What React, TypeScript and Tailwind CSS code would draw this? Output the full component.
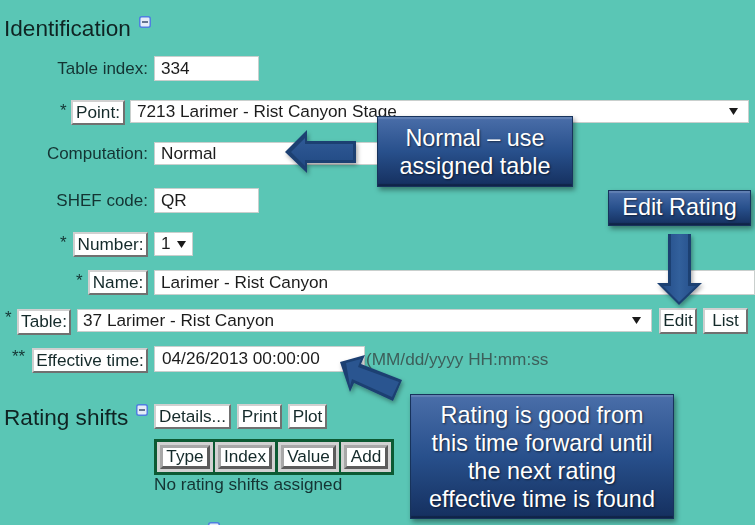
import React from "react";

const Btn = ({ children, className = "" }: { children: React.ReactNode; className?: string }) => (
  <span className={`flex items-center justify-center bg-white border-2 border-t-[#d0d0d0] border-l-[#d0d0d0] border-r-[#707070] border-b-[#707070] text-[17.2px] leading-none whitespace-nowrap text-[#142a2a] ${className}`}>
    {children}
  </span>
);

const Field = ({ children, className = "" }: { children: React.ReactNode; className?: string }) => (
  <span className={`flex items-center bg-white border border-[#c9cfcd] text-[17.2px] leading-none whitespace-nowrap text-[#1c1c1c] pl-1.5 ${className}`}>
    {children}
  </span>
);

const Label = ({ children }: { children: React.ReactNode }) => (
  <span className="w-[148px] text-right text-[17px] leading-none text-[#143433] shrink-0">{children}</span>
);

const Star = ({ children, className = "" }: { children: React.ReactNode; className?: string }) => (
  <span className={`text-[17px] leading-none text-[#143433] shrink-0 -mt-1 ${className}`}>{children}</span>
);

const Caret = () => (
  <svg width="9" height="7" viewBox="0 0 9 7" className="shrink-0">
    <path d="M0 0H9L4.5 7Z" fill="#1a1a1a" />
  </svg>
);

const Minus = () => (
  <svg width="12" height="12" viewBox="0 0 12 12" className="shrink-0">
    <rect x="0.75" y="0.75" width="10.5" height="10.5" rx="2" fill="#e6ecf8" stroke="#4f7fe0" strokeWidth="1.5" />
    <rect x="3" y="5" width="6" height="2" fill="#64748f" />
  </svg>
);

const HeaderCell = ({ children, className = "" }: { children: React.ReactNode; className?: string }) => (
  <span className={`flex bg-[#d2d2d2] p-[3px] h-[30px] ${className}`}>
    <span className="flex flex-1 items-center justify-center bg-white border-[3px] border-t-[#a8a8a8] border-l-[#a8a8a8] border-r-[#5c5c5c] border-b-[#5c5c5c] text-[17.2px] leading-none text-[#142a2a]">
      {children}
    </span>
  </span>
);

const Callout = ({ children, className = "" }: { children: React.ReactNode; className?: string }) => (
  <div
    className={`absolute flex items-center justify-center text-center text-white font-['Liberation_Sans',sans-serif] bg-gradient-to-b from-[#4a6ea9] via-[#28508c] to-[#15305f] border border-[#17335c] shadow-[2px_3px_5px_rgba(0,0,0,0.4),inset_0_2px_1px_rgba(255,255,255,0.14),inset_0_-2px_1px_rgba(0,0,0,0.25)] [text-shadow:1px_1px_2px_rgba(0,0,0,0.55)] ${className}`}
  >
    {children}
  </div>
);

const Arrows = () => (
  <svg width="755" height="525" viewBox="0 0 755 525" className="absolute left-0 top-0 pointer-events-none">
    <defs>
      <linearGradient id="ga" x1="0" y1="0" x2="0" y2="1">
        <stop offset="0" stopColor="#2f5a96" />
        <stop offset="1" stopColor="#224a84" />
      </linearGradient>
      <linearGradient id="gd" x1="0" y1="0" x2="1" y2="0">
        <stop offset="0" stopColor="#244d88" />
        <stop offset="0.5" stopColor="#32609c" />
        <stop offset="1" stopColor="#244d88" />
      </linearGradient>
      <filter id="sh" x="-20%" y="-20%" width="150%" height="150%">
        <feDropShadow dx="1.5" dy="2.5" stdDeviation="2" floodColor="#000" floodOpacity="0.35" />
      </filter>
    </defs>
    <g filter="url(#sh)">
      <path d="M285 152L307 130V141H356V163H307V173Z" fill="#1d3f72" />
    </g>
    <path d="M291 152L305 138V144H353V160H305V166Z" fill="url(#ga)" />
    <g filter="url(#sh)">
      <path d="M668 234H691V283H702L679 305L657 283H668Z" fill="#1d3f72" />
    </g>
    <path d="M671 234H688V286H696L679 302L663 286H671Z" fill="url(#gd)" />
    <g filter="url(#sh)">
      <path d="M340 362L365 355L361 364L402 380L393 401L354 383L350 392Z" fill="#1d3f72" />
    </g>
    <path d="M346 363L361 359L358 367L399 382L392 397L352 379L350 386Z" fill="#2a5590" />
  </svg>
);

export default function App() {
  return (
    <div className="relative w-[755px] h-[525px] overflow-hidden bg-[#5ac6b5] font-['Liberation_Sans',sans-serif]">
      <div className="blur-[0.35px]">
        <div className="flex items-start pl-1 pt-4 h-[56px]">
          <span className="text-[22.6px] leading-none mt-[2px] text-[#0f2423]">Identification</span>
          <span className="ml-2"><Minus /></span>
        </div>

        <div className="flex items-center gap-1.5 h-[25px]">
          <Label>Table index:</Label>
          <Field className="w-[105px] h-[25px]">334</Field>
        </div>

        <div className="flex items-center h-[25px] mt-[19px] pl-[60px]">
          <Star className="w-[11px]">*</Star>
          <Btn className="w-[54px] h-[25px]">Point:</Btn>
          <Field className="w-[619px] h-[23px] ml-[5px] self-start justify-between pr-2.5">
            <span>7213 Larimer - Rist Canyon Stage</span>
            <Caret />
          </Field>
        </div>

        <div className="flex items-center gap-1.5 h-[23px] mt-[17px]">
          <Label>Computation:</Label>
          <Field className="w-[224px] h-[23px]">Normal</Field>
        </div>

        <div className="flex items-center gap-1.5 h-[25px] mt-[23px]">
          <Label>SHEF code:</Label>
          <Field className="w-[105px] h-[25px]">QR</Field>
        </div>

        <div className="flex items-center h-[25px] mt-[19px] pl-[60px]">
          <Star className="w-[13px]">*</Star>
          <Btn className="w-[75px] h-[25px]">Number:</Btn>
          <Field className="w-[39px] h-[24px] ml-1.5 self-start gap-1.5">
            <span>1</span>
            <Caret />
          </Field>
        </div>

        <div className="flex items-center h-[25px] mt-[13px] pl-[76px]">
          <Star className="w-[12px]">*</Star>
          <Btn className="w-[60px] h-[25px]">Name:</Btn>
          <Field className="w-[601px] h-[25px] ml-1.5">Larimer - Rist Canyon</Field>
        </div>

        <div className="flex items-start h-[26px] mt-[14px] pl-[5px]">
          <Star className="w-[12px] mt-0">*</Star>
          <Btn className="w-[54px] h-[26px]">Table:</Btn>
          <Field className="w-[575px] h-[23px] ml-1.5 justify-between pr-2.5 pl-[5px]">
            <span>37 Larimer - Rist Canyon</span>
            <Caret />
          </Field>
          <Btn className="w-[38px] h-[26px] ml-[7px] -mt-px">Edit</Btn>
          <Btn className="w-[45px] h-[26px] ml-1.5 -mt-px">List</Btn>
        </div>

        <div className="flex items-start h-[27px] mt-[11px] pl-3">
          <Star className="w-[20px] mt-[2px]">**</Star>
          <Btn className="w-[116px] h-[25px] mt-[2px]">Effective time:</Btn>
          <Field className="w-[211px] h-[26px] ml-1.5 pl-[7px]">04/26/2013 00:00:00</Field>
          <span className="text-[17.2px] leading-none whitespace-nowrap text-[#3d5f5a] ml-px mt-[5px]">(MM/dd/yyyy HH:mm:ss</span>
        </div>

        <div className="flex items-start mt-[31px] pl-1">
          <span className="text-[22.6px] leading-none mt-[3px] w-[132px] text-[#0f2423] shrink-0">Rating shifts</span>
          <Minus />
          <span className="flex flex-col ml-1.5">
            <span className="flex gap-1.5">
              <Btn className="w-[77px] h-[25px]">Details...</Btn>
              <Btn className="w-[45px] h-[25px]">Print</Btn>
              <Btn className="w-[39px] h-[25px]">Plot</Btn>
            </span>
            <span className="flex w-[240px] h-[36px] mt-[10px] bg-[#0c5a33] p-[3px]">
              <HeaderCell className="w-[56px]">Type</HeaderCell>
              <HeaderCell className="w-[60px] ml-[2px]">Index</HeaderCell>
              <HeaderCell className="w-[61px] ml-[3px]">Value</HeaderCell>
              <HeaderCell className="w-[50px] ml-[2px]">Add</HeaderCell>
            </span>
            <span className="text-[17.2px] leading-none text-[#143433] mt-[1px] whitespace-nowrap">No rating shifts assigned</span>
          </span>
        </div>

        <div className="absolute left-[208px] top-[522px]"><Minus /></div>
      </div>

      <Arrows />

      <Callout className="left-[377px] top-[116px] w-[196px] h-[71px] text-[23.4px] leading-[28px]">
        <span>Normal – use<br />assigned table</span>
      </Callout>
      <Callout className="left-[608px] top-[190px] w-[143px] h-[36px] text-[23.4px] leading-none">Edit Rating</Callout>
      <Callout className="left-[410px] top-[394px] w-[264px] h-[125px] text-[23.4px] leading-[28px]">
        <span>Rating is good from<br />this time forward until<br />the next rating<br />effective time is found</span>
      </Callout>
    </div>
  );
}
